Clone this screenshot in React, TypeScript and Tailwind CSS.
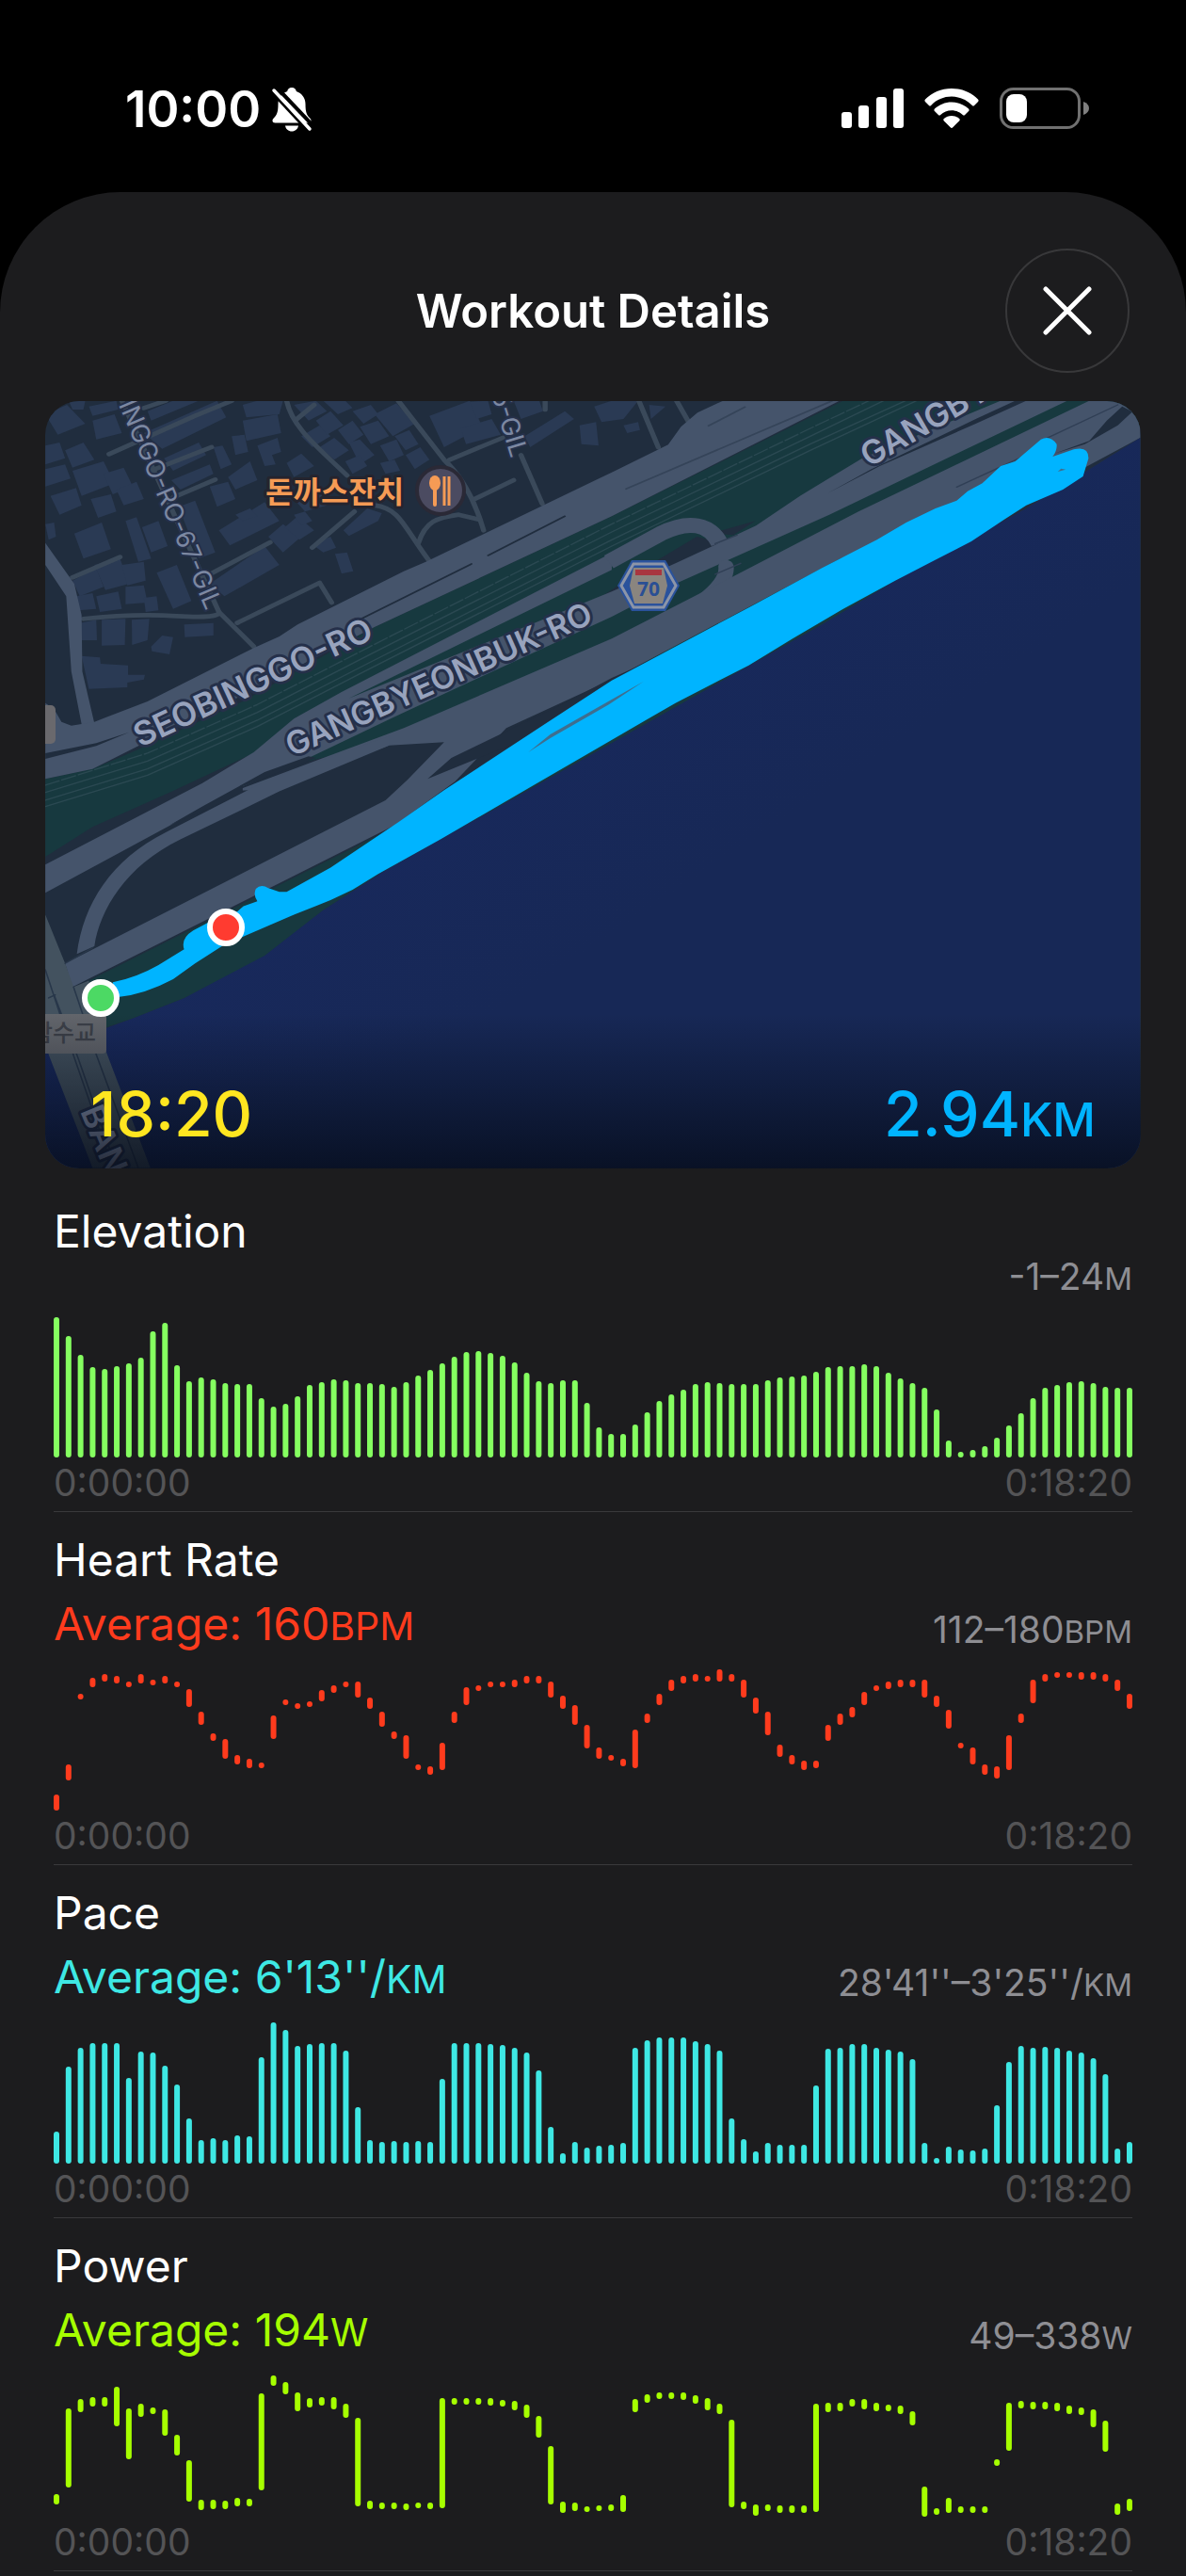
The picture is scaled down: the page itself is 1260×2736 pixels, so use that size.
import type { ReactNode } from "react";

type Span = [number, number];

const CHART_HEIGHT = 150;

/** Bars that all stand on the baseline of the chart. */
const fromHeights = (heights: number[]): Span[] =>
  heights.map((h) => [CHART_HEIGHT - h, CHART_HEIGHT]);

const elevation = fromHeights([
  149, 129, 109, 96, 94, 97, 100, 106, 134, 143, 98, 81, 85, 83, 79, 78, 78, 63, 54, 57,
  65, 77, 80, 83, 82, 79, 79, 78, 75, 80, 87, 93, 100, 107, 112, 113, 111, 108, 101, 90,
  81, 79, 82, 82, 58, 32, 25, 25, 35, 48, 60, 67, 72, 78, 80, 79, 78, 78, 78, 82,
  85, 86, 87, 91, 96, 97, 97, 99, 97, 90, 84, 79, 74, 51, 18, 6, 8, 12, 21, 34,
  47, 63, 74, 77, 80, 81, 79, 75, 74, 74,
]);

const heartRate: Span[] = [
  [133, 150], [101, 118], [26, 32], [9, 19], [5, 13], [7, 15], [13, 19], [5, 15], [11, 17], [7, 15],
  [13, 19], [21, 40], [45, 59], [68, 76], [74, 95], [91, 101], [95, 105], [99, 105], [49, 74], [32, 38],
  [36, 42], [34, 40], [22, 34], [17, 25], [13, 19], [13, 30], [30, 42], [45, 61], [66, 74], [70, 95],
  [101, 107], [103, 112], [78, 107], [45, 57], [19, 38], [17, 23], [13, 19], [13, 19], [11, 19], [7, 15],
  [7, 15], [13, 30], [28, 42], [38, 59], [59, 84], [83, 95], [91, 97], [95, 103], [64, 105], [47, 57],
  [26, 38], [11, 23], [7, 15], [5, 13], [7, 13], [0, 13], [5, 13], [11, 30], [30, 47], [45, 70],
  [80, 93], [91, 101], [97, 107], [97, 105], [59, 76], [47, 59], [40, 51], [24, 38], [17, 23], [13, 21],
  [11, 19], [11, 19], [11, 30], [28, 40], [43, 63], [78, 84], [83, 101], [101, 112], [103, 116], [70, 107],
  [47, 57], [11, 36], [5, 13], [3, 9], [3, 9], [3, 11], [3, 11], [5, 13], [11, 23], [26, 42],
];

const pace = fromHeights([
  34, 103, 123, 128, 128, 128, 91, 119, 118, 104, 84, 48, 25, 27, 25, 30, 29, 113, 150, 142,
  125, 127, 128, 128, 120, 60, 25, 23, 24, 23, 24, 23, 90, 128, 128, 128, 127, 126, 123, 118,
  99, 39, 11, 23, 17, 19, 20, 22, 123, 131, 134, 134, 134, 130, 127, 120, 48, 26, 13, 22,
  20, 20, 20, 83, 122, 123, 127, 127, 123, 121, 119, 111, 22, 6, 18, 15, 14, 16, 62, 108,
  125, 123, 124, 123, 120, 118, 112, 95, 16, 23,
]);

const power: Span[] = [
  [126, 137], [35, 119], [25, 39], [23, 33], [23, 33], [12, 54], [35, 89], [30, 44], [34, 41], [36, 64],
  [63, 85], [90, 134], [132, 143], [132, 142], [133, 142], [130, 139], [131, 139], [19, 122], [0, 11], [7, 20],
  [18, 38], [24, 34], [23, 32], [23, 36], [30, 45], [45, 139], [133, 142], [135, 142], [135, 142], [136, 143],
  [135, 141], [135, 142], [24, 141], [24, 31], [24, 31], [24, 31], [24, 32], [26, 33], [27, 37], [31, 45],
  [43, 66], [75, 137], [134, 146], [135, 144], [139, 145], [138, 144], [137, 144], [127, 145], [25, 39], [20, 29],
  [18, 25], [18, 25], [18, 26], [21, 30], [24, 37], [30, 41], [47, 140], [134, 142], [137, 149], [137, 144],
  [138, 146], [138, 146], [138, 146], [30, 145], [29, 39], [29, 38], [25, 33], [25, 36], [29, 38], [31, 38],
  [32, 41], [38, 53], [118, 150], [141, 148], [130, 146], [139, 146], [139, 146], [139, 146], [89, 96], [29, 80],
  [27, 35], [28, 36], [28, 36], [29, 38], [32, 41], [34, 42], [36, 55], [48, 81], [136, 148], [131, 144],
];

function Chart({ data, label }: { data: Span[]; label: string }) {
  const step = 1140 / (data.length - 1);
  return (
    <svg viewBox="0 0 1146 150" className="block w-full mt-[21px]" role="img" aria-label={label}>
      {data.map(([top, bottom], i) => (
        <rect key={i} x={i * step} y={top} width="6" height={bottom - top} rx="3" fill="currentColor" />
      ))}
    </svg>
  );
}

type MetricProps = {
  title: string;
  color: string;
  data: Span[];
  average?: ReactNode;
  range: ReactNode;
};

function Metric({ title, color, data, average, range }: MetricProps) {
  return (
    <section className={`${color} border-b border-[#3a3a3c] pt-6 pb-[7px]`}>
      <h2 className="text-5xl leading-[54px] font-normal text-white">{title}</h2>
      <div className={`flex items-end justify-between ${average ? "mt-[14px]" : ""}`}>
        <p className="text-5xl leading-[54px]">{average}</p>
        <p className="text-[39px] leading-[42px] text-[#8e8e93]">{range}</p>
      </div>
      <Chart data={data} label={`${title} over time`} />
      <div className="mt-1 flex justify-between text-[39px] leading-[46px] text-[#545456]">
        <span>0:00:00</span>
        <span>0:18:20</span>
      </div>
    </section>
  );
}

const Unit = ({ children }: { children: ReactNode }) => (
  <span className="text-[41px] leading-none">{children}</span>
);
const SmallUnit = ({ children }: { children: ReactNode }) => (
  <span className="text-[33px] leading-none">{children}</span>
);

const buildings = [
  "21,60 80,30 130,90 55,125", "85,17 130,17 125,45 95,45", "150,80 210,60 230,120 160,140",
  "140,35 215,17 220,45 150,65", "290,120 490,17 515,70 340,170", "300,50 370,17 440,17 310,80",
  "75,175 125,150 155,205 95,230", "21,160 60,150 75,200 21,220", "21,235 75,220 90,265 21,290",
  "35,320 105,295 120,350 60,380", "95,240 180,210 210,280 120,320", "180,250 235,230 260,290 205,315",
  "215,300 270,275 290,330 235,350", "145,330 200,315 215,370 165,390", "100,440 175,405 200,490 125,520",
  "240,400 270,388 310,520 275,530", "285,420 330,400 355,480 310,500", "21,410 45,405 50,450 30,460",
  "385,355 430,335 485,500 440,520", "495,430 620,340 660,400 525,478", "470,290 520,275 540,330 490,355",
  "520,260 580,210 600,270 540,300", "345,200 440,150 460,190 370,240", "365,270 470,220 480,250 390,300",
  "480,165 505,160 530,220 500,235", "530,130 565,125 575,180 540,190", "560,80 655,60 665,120 570,145",
  "560,30 600,17 670,17 660,60 570,70", "600,160 655,135 665,180 640,190 650,220 620,225",
  "680,215 720,185 755,225 700,260", "720,130 770,95 800,130 750,165", "760,80 800,50 835,95 790,125",
  "700,30 760,17 790,50 740,80", "780,17 840,17 860,40 820,60", "820,110 860,80 890,125 850,155",
  "770,165 810,135 850,175 810,205", "850,150 880,140 920,190 880,220", "880,100 930,80 960,130 910,155",
  "920,60 980,25 1030,90 970,130", "860,50 910,30 930,60 890,90", "935,160 980,140 1000,190 960,210",
  "975,130 1015,110 1040,155 1005,175", "1005,190 1045,165 1070,205 1030,235", "935,215 975,205 990,240 950,250",
  "840,210 880,190 900,225 860,250", "1070,65 1180,17 1215,100 1110,165", "1155,105 1240,75 1265,125 1170,155",
  "1180,20 1230,17 1240,60 1200,75", "1330,130 1440,50 1465,75 1345,165", "1300,17 1370,17 1380,50 1320,75",
  "1480,95 1525,85 1532,160 1485,155", "1520,35 1568,17 1640,17 1600,75 1540,85", "1600,95 1640,85 1645,110 1610,120",
  "1670,30 1715,35 1675,75", "95,590 160,550 180,610 115,640", "155,540 225,520 250,600 185,620",
  "230,540 290,530 295,590 245,605", "325,565 380,540 420,655 370,680", "470,600 620,480 660,540 510,640",
  "105,640 150,630 160,680 110,685", "160,640 220,625 230,680 170,690", "240,610 290,605 300,660 240,665",
  "290,645 325,640 330,685 295,690", "115,725 160,715 162,780 120,780", "175,715 240,712 238,795 175,797",
  "257,715 305,712 300,780 258,795", "310,800 340,765 370,770 360,825 312,815", "400,730 480,725 480,765 402,770",
  "120,830 170,835 172,855 247,860 247,890 293,890 290,905 245,915 245,930 140,935", "630,450 670,410 720,450 670,500",
  "675,420 710,385 755,430 715,460", "700,380 730,370 750,400 720,415", "750,475 800,450 815,485 780,500",
  "812,505 845,500 862,560 830,568", "835,430 900,360 940,375 930,400 850,448", "560,400 600,385 580,360 540,380",
  "700,330 770,300 790,350 730,370",
];

const lanes = [
  "M230 17L495 690L590 800", "M195 187L430 65L530 17", "M310 240L475 165", "M370 325L485 268",
  "M95 580L225 515", "M470 570L635 468", "M125 712Q260 695 380 703T495 690", "M545 725L770 597L803 660",
  "M680 17C695 100 760 160 845 255", "M705 78L755 30", "M985 17L1110 205Q1180 280 1218 430",
  "M1125 205L1270 135", "M1190 332L1300 270", "M1320 190L1378 345", "M920 350C990 360 1000 420 1068 525",
  "M1040 470C1060 400 1090 390 1150 380T1205 395", "M750 485L865 370", "M1642 17L1695 165", "M1745 17L1778 85",
  "M1386 17V45", "M290 40L350 17",
];

function RouteMap() {
  return (
    <svg viewBox="48 426 1164 815" className="block w-full" role="img" aria-label="Route map">
      <defs>
        <linearGradient id="water" x1="0" y1="0" x2="1" y2="1">
          <stop offset="0" stopColor="#1a2a68" />
          <stop offset="0.6" stopColor="#172856" />
        </linearGradient>
        <linearGradient id="shade" x1="0" y1="0" x2="0" y2="1">
          <stop offset="0" stopColor="#050b18" stopOpacity="0" />
          <stop offset="1" stopColor="#050b18" stopOpacity="0.78" />
        </linearGradient>
      </defs>
      <rect x="48" y="426" width="1164" height="815" fill="#202d3e" />

      <g transform="translate(40 420) scale(0.389 0.3333)" strokeLinecap="round" strokeLinejoin="round">
        <g fill="#2a3a54">
          {buildings.map((points) => (
            <polygon key={points} points={points} />
          ))}
        </g>
        <g fill="none" stroke="#3a495a" strokeWidth="14">
          {lanes.map((d) => (
            <path key={d} d={d} />
          ))}
        </g>

        <path fill="#45546b" d="M21 470L100 600L120 700L122 880L155 1045L120 1048L92 880L78 640L21 540Z" />
        <path fill="#17393f" d="M21 1222L150 1190L270 1130L560 975L920 738L1568 385L2200 17H3011V100L1568 900L1060 1080L740 1165L590 1140L370 1260L150 1375L21 1470Z" />
        <path fill="#202d3e" d="M1542 640L1650 555L1800 450L1870 470L1742 545ZM1840 440L1960 400L1900 445Z" />
        <g fill="none" stroke="#2b4952" strokeWidth="4">
          <path d="M21 1290L300 1190L600 1035L900 855L1568 460L2110 155L2370 17" />
          <path d="M21 1310L300 1210L600 1055L900 875L1568 480L2110 175L2400 17" />
          <path d="M21 1265L300 1165L600 1010L900 830L1568 435L2110 130L2310 17" />
          <path d="M21 1242L300 1140L600 985L900 805L1568 410L2110 105L2270 17" strokeDasharray="40 8" />
        </g>
        <path fill="#45546b" d="M21 980L45 1000L65 1040L92 1052L155 1040L300 975L590 805L660 768L710 730L1000 560L1060 530L1568 245L1722 157L1757 100L1802 55L1872 17H2190L1568 385L920 738L560 955L270 1120L150 1190L21 1222Z" />
        <path fill="#202d3e" d="M21 1140L160 1108L250 1073L160 1117L21 1158Z" />
        <path fill="none" stroke="#202d3e" strokeWidth="5" d="M885 711L1185 537M1230 510L1440 385" />
        <path fill="none" stroke="#354459" strokeWidth="5" d="M1607 298L2170 17M1832 97L1932 37" />

        <path fill="#45546b" d="M21 1495L450 1235L590 1137L700 1030L830 945L1568 502V556L850 965L1568 625L1742 535L1962 415L2082 320L2252 200L2630 17H2812L2162 380L1742 600L1568 705L1000 1010L740 1155L560 1245L21 1585Z" />
        <path fill="none" stroke="#45546b" strokeWidth="48" strokeLinecap="butt" d="M1560 530L1702 440C1780 395 1835 410 1862 470" />
        <path fill="none" stroke="#45546b" strokeWidth="42" d="M1880 545Q1885 590 1820 650" />
        <path fill="#202d3e" d="M2157 312L2277 235L2562 75L2670 17H2700L2562 90L2300 225Z" />
        <path fill="#45546b" d="M540 1260L780 1155L1000 1060L1568 775L1902 575L2242 370L2872 17H3011V135L2700 330L2192 520L1568 905L1280 1060L1140 1230L975 1370L95 1885L75 1810L950 1290L1010 1225L1110 1105L960 1115L640 1255Z" />
        <path fill="#202d3e" d="M560 1245L760 1155L740 1150L620 1200L450 1310L360 1370L560 1270Z" />
        <path fill="#45546b" d="M640 1218L960 1085V1115L660 1262L390 1415C240 1500 170 1640 155 1755L107 1780C125 1620 200 1480 350 1392Z" />
        <path fill="#202d3e" d="M1065 1222L1130 1155L1440 980L1568 900L1900 730L2192 535L2150 600L1568 940L1300 1110Z" />
        <path fill="#202d3e" d="M2777 185L2872 145L2920 80L2962 35L2990 52L2950 95L2860 155Z" />
        <path fill="none" stroke="#303f55" strokeWidth="4" d="M2510 292L2700 190M2740 145L2950 30M1850 472L1910 445M1850 570L1920 535" />

        <path fill="url(#water)" d="M21 2060L190 2015L260 1985L400 1920L620 1780L780 1640L940 1520L1360 1240L2142 720L2342 590L2700 360L3011 135V2462H21Z" />
        <path fill="#17393f" d="M140 1865L975 1375L1200 1230L1568 960L2192 550L2345 588L2142 730L1360 1244L940 1520L780 1640L620 1785L400 1920L260 1985L185 2015Z" />
        <path fill="#43525f" d="M21 1655L75 1810L98 1885L140 1865L150 1960L190 2100L308 2462H150L30 2100L21 2060Z" />
        <path fill="none" stroke="#28374a" strokeWidth="4" d="M21 1830L100 2110L205 2462M45 1910L110 2110L215 2462M98 1885L160 2100L275 2462M75 1810L150 1760M30 1920L48 1910" />

        <path
          fill="#00b4ff"
          d="M205 1870Q270 1855 330 1815L400 1765Q390 1730 425 1705L465 1680L545 1645L562 1628L600 1612Q588 1590 596 1572Q610 1555 630 1570L660 1582H680L800 1505L985 1360L1110 1258L1300 1112L1568 908L1742 800L1952 670L2142 550L2292 460L2372 405L2452 360L2510 335L2540 305L2580 280L2630 225L2670 210L2740 140Q2765 125 2783 155Q2785 175 2772 195L2830 172Q2870 160 2870 200L2855 258L2800 300L2700 350L2640 395L2550 465L2450 525L2342 590L2200 680L2062 775L1942 860L1742 980L1542 1115L1360 1238L1100 1415L930 1525L860 1575L800 1608L765 1625L700 1655L560 1725L510 1750L430 1810L370 1860Q290 1910 215 1918Z"
        />
        <path fill="#3f6e8e" d="M1340 1137L1400 1080L1655 911L1560 985L1400 1092Z" />
        <path fill="#3f6e8e" d="M2786 243L2795 233L2808 236Z" />
      </g>

      <rect x="40" y="749" width="19" height="41" rx="5" fill="#6a696d" />

      <g
        fontFamily="Inter, 'Liberation Sans', sans-serif"
        fill="#98a3bd"
        stroke="#25304a"
        strokeWidth="6"
        strokeLinejoin="round"
        paintOrder="stroke"
        fontSize="35"
        fontWeight="600"
      >
        <text transform="translate(149 794) rotate(-25)">SEOBINGGO-RO</text>
        <text transform="translate(310 804) rotate(-24)" fontSize="34">GANGBYEONBUK-RO</text>
        <text transform="translate(923 497) rotate(-30)">GANGBY</text>
        <text transform="translate(85 1180) rotate(68)">BAN</text>
        <g fontSize="27" fontWeight="400" fill="#7c88a2" strokeWidth="4" textAnchor="end">
          <text transform="translate(219 649) rotate(67)">INGGO-RO-67-GIL</text>
          <text transform="translate(543 487) rotate(73)">5-GIL</text>
        </g>
      </g>

      <text
        x="282"
        y="534"
        fontFamily="'Noto Sans CJK KR', sans-serif"
        fontSize="32"
        fontWeight="700"
        fill="#f59b55"
        stroke="#25242e"
        strokeWidth="6"
        strokeLinejoin="round"
        paintOrder="stroke"
      >
        돈까스잔치
      </text>
      <circle cx="468" cy="521" r="25" fill="#4b4b61" stroke="#2a2936" strokeWidth="4" />
      <ellipse cx="462" cy="513" rx="6" ry="8" fill="#f59b55" />
      <path d="M462 516V536" stroke="#f59b55" strokeWidth="4" strokeLinecap="round" />
      <path d="M472 506V537M477 506V537" stroke="#f59b55" strokeWidth="3" />

      <path d="M656 622L671 595H707L722 622L707 649H671Z" fill="#2a529c" />
      <path d="M660 622L673 599H705L718 622L705 645H673Z" fill="none" stroke="#8c95a8" strokeWidth="3" />
      <path d="M673 603H705L709 622L704 641H674L669 622Z" fill="#8a857f" />
      <path d="M675 605H703V611H675Z" fill="#a83640" />
      <text x="689" y="633" textAnchor="middle" fontFamily="'Open Sans', sans-serif" fontSize="21" fontWeight="700" fill="#2a4f94">
        70
      </text>

      <rect x="30" y="1077" width="83" height="42" rx="4" fill="#62656b" />
      <text x="102" y="1106" textAnchor="end" fontFamily="'Noto Sans CJK KR', sans-serif" fontSize="25" fontWeight="500" fill="#3c4048">
        잠수교
      </text>

      <rect x="48" y="1077" width="1164" height="164" fill="url(#shade)" />

      <g stroke="#fff" strokeWidth="6">
        <circle cx="107" cy="1060" r="17" fill="#4cd964" />
        <circle cx="240" cy="985" r="17" fill="#ff3b30" />
      </g>
    </svg>
  );
}

function StatusBar() {
  return (
    <header className="flex items-start justify-between px-[103px] pt-[84px] pb-[56px] pl-[133px]">
      <div className="flex items-center gap-[11px]">
        <time className="text-[53px] leading-[64px] font-semibold text-white">10:00</time>
        <svg viewBox="0 0 44 48" className="h-12 w-11" aria-label="Silent mode" role="img">
          <path
            fill="#fff"
            d="M22 1c2.800 0 4.600 1.800 4.800 4 6 2 9.700 7.200 9.700 13.500 0 9 1.500 11.500 4.300 14.500 1.500 1.600 1.700 2 1.700 3.200 0 1.300-1.200 2.300-2.800 2.300H4.300C2.700 38.500 1.500 37.500 1.500 36.200c0-1.200.3-1.600 1.700-3.200C6 30 7.500 27.500 7.500 18.500 7.500 12.200 11.200 7 17.200 5 17.400 2.800 19.200 1 22 1ZM15 41.500h14c-.6 3.500-3.400 6-7 6s-6.400-2.500-7-6Z"
          />
          <path d="M7 2L47 44" stroke="#000" strokeWidth="4" />
          <path d="M0 5L40 48" stroke="#000" strokeWidth="3" />
          <path d="M3 4L41 45" stroke="#fff" strokeWidth="3.500" strokeLinecap="round" />
        </svg>
      </div>
      <div className="flex items-center gap-[22px] pt-[9px]">
        <svg viewBox="0 0 66 42" className="h-[42px] w-[66px]" role="img" aria-label="Signal" fill="#fff">
          <rect x="0" y="25" width="11" height="17" rx="3" />
          <rect x="18" y="18" width="11" height="24" rx="3" />
          <rect x="37" y="9" width="11" height="33" rx="3" />
          <rect x="55" y="0" width="11" height="42" rx="3" />
        </svg>
        <svg viewBox="0 0 58 42" className="h-[42px] w-[58px]" role="img" aria-label="Wi-Fi" fill="#fff">
          <path d="M29 0C18 0 8 4.300 1 11.500c-.8.8-.8 1.700-.1 2.400l4 4c.7.700 1.500.7 2.200 0C13 12 20.500 8.600 29 8.600S45 12 50.900 17.900c.7.700 1.500.7 2.200 0l4-4c.7-.7.700-1.600-.1-2.400C50 4.300 40 0 29 0Z" />
          <path d="M29 14.500c-7 0-13.300 2.700-18 7.100-.8.8-.8 1.700-.1 2.400l4 4c.7.700 1.500.7 2.300 0 3.200-3 7.300-4.700 11.800-4.700s8.600 1.700 11.800 4.700c.8.700 1.600.7 2.300 0l4-4c.7-.7.700-1.600-.1-2.400-4.700-4.400-11-7.100-18-7.100Z" />
          <path d="M29 29c-3.100 0-5.900 1.100-8.100 3-.9.800-.8 1.600 0 2.400l6.800 6.900c.8.900 1.800.9 2.600 0l6.800-6.900c.8-.8.900-1.600 0-2.400-2.200-1.900-5-3-8.100-3Z" />
        </svg>
        <svg viewBox="0 0 95 44" className="h-11 w-[95px]" role="img" aria-label="Battery low">
          <rect x="1.500" y="1.500" width="83" height="41" rx="13" fill="none" stroke="#707070" strokeWidth="3" />
          <path d="M89 15c4 1.500 6 4 6 7s-2 5.500-6 7Z" fill="#808080" />
          <rect x="7" y="7" width="22" height="30" rx="8" fill="#fff" />
        </svg>
      </div>
    </header>
  );
}

export default function App() {
  return (
    <div className="flex min-h-screen flex-col bg-black font-[Inter,'Liberation_Sans',sans-serif]">
      <StatusBar />
      <main className="flex-1 rounded-t-[128px] bg-[#1c1c1e] pt-[60px]">
        <div className="grid grid-cols-[1fr_auto_1fr] items-center px-[60px]">
          <h1 className="col-start-2 pt-[2px] text-[49px] leading-[60px] font-semibold text-white">Workout Details</h1>
          <button
            type="button"
            aria-label="Close"
            className="flex size-[132px] items-center justify-center justify-self-end rounded-full border-2 border-[#38383a]"
          >
            <svg viewBox="0 0 52 52" className="size-[52px]" stroke="#fff" strokeWidth="5" strokeLinecap="round">
              <path d="M3 3L49 49M49 3L3 49" />
            </svg>
          </button>
        </div>

        <div className="relative mx-12 mt-[30px] overflow-hidden rounded-[36px]">
          <RouteMap />
          <div className="absolute inset-x-12 bottom-[18px] flex items-baseline justify-between text-[66px] leading-[80px] font-medium">
            <span className="text-[#ffe620]">18:20</span>
            <span className="text-[#00b4ff]">
              2.94<span className="text-[50px] leading-none">KM</span>
            </span>
          </div>
        </div>

        <div className="mx-[57px] pt-4">
          <Metric
            title="Elevation"
            color="text-[#85ff60]"
            data={elevation}
            range={<>-1–24<SmallUnit>M</SmallUnit></>}
          />
          <Metric
            title="Heart Rate"
            color="text-[#ff3b1d]"
            data={heartRate}
            average={<>Average: 160<Unit>BPM</Unit></>}
            range={<>112–180<SmallUnit>BPM</SmallUnit></>}
          />
          <Metric
            title="Pace"
            color="text-[#3ee8e4]"
            data={pace}
            average={<>Average: 6'13''/<Unit>KM</Unit></>}
            range={<>28'41''–3'25''/<SmallUnit>KM</SmallUnit></>}
          />
          <Metric
            title="Power"
            color="text-[#a6ff00]"
            data={power}
            average={<>Average: 194<Unit>W</Unit></>}
            range={<>49–338<SmallUnit>W</SmallUnit></>}
          />
        </div>
      </main>
    </div>
  );
}
